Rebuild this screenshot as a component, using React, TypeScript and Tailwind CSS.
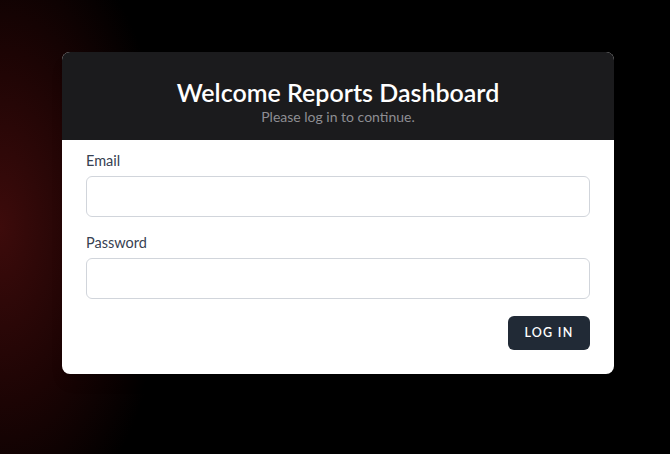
import React from "react";

const Field = ({ label, type }: { label: string; type: string }) => {
  return (
    <div className="flex flex-col">
      <label className="text-[14.5px] leading-5 text-[#374151] mb-[5px]">{label}</label>
      <input
        type={type}
        className="h-[41px] w-full rounded-md border border-[#d1d5db] bg-white px-3 text-sm outline-none"
      />
    </div>
  );
};

const App = () => {
  return (
    <div
      className="min-h-[454px] w-full flex justify-center pt-[52px] pl-[6px] bg-black bg-[radial-gradient(ellipse_170px_320px_at_0%_50%,#3d0b0b_0%,#1c0404_55%,#000000_100%)]"
      style={{ fontFamily: "Lato, 'Noto Sans', sans-serif" }}
    >
      <div className="w-[552px] h-[322px] rounded-lg overflow-hidden bg-white shadow-lg flex flex-col">
        <div className="h-[88px] bg-[#1b1b1d] flex flex-col items-center pt-[24px]">
          <h1 className="text-[25px] leading-8 font-semibold text-white">
            Welcome Reports Dashboard
          </h1>
          <p className="text-[14px] leading-5 text-[#8e8e93] -mt-[1px]">Please log in to continue.</p>
        </div>
        <div className="flex flex-col px-6 pt-[11px]">
          <Field label="Email" type="email" />
          <div className="h-4" />
          <Field label="Password" type="password" />
          <div className="flex justify-end mt-[17px]">
            <button className="h-[34px] w-[82px] rounded-md bg-[#212a36] text-white text-[12.5px] font-semibold tracking-[0.1em]">
              LOG IN
            </button>
          </div>
        </div>
      </div>
    </div>
  );
};

export default App;
